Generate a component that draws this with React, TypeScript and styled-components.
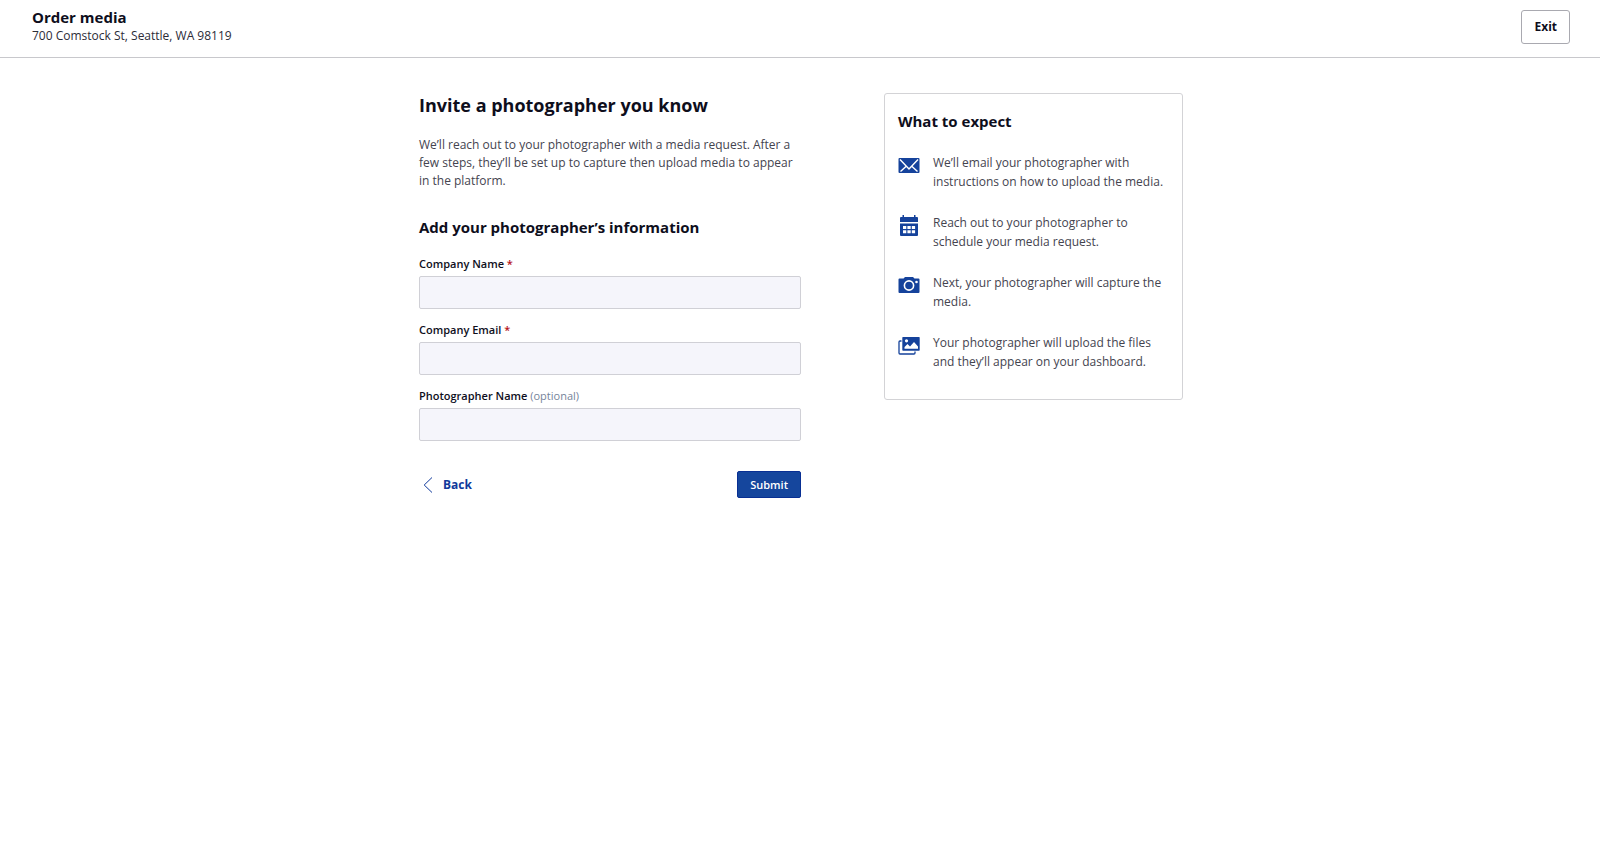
import React from 'react';
import styled, { createGlobalStyle } from 'styled-components';

const GlobalStyle = createGlobalStyle`
  * { box-sizing: border-box; }
  body {
    margin: 0;
    background: #fff;
    color: #0e0e1c;
    font-family: 'Open Sans', sans-serif;
    font-size: 12px;
    line-height: 18px;
  }
  h1, h2, p, ul { margin: 0; padding: 0; }
  button, input { font-family: inherit; }
`;

const TopBar = styled.header`
  display: flex;
  justify-content: space-between;
  align-items: center;
  padding: 8px 30px 11px 32px;
  border-bottom: 1px solid #c8c8cc;
`;

const PageTitle = styled.h1`
  font-size: 15px;
  line-height: 18px;
  font-weight: 700;
`;

const Address = styled.p`
  line-height: 20px;
  color: #2c2c38;
`;

const ExitButton = styled.button`
  height: 34px;
  padding: 0 12px;
  border: 1px solid #a9a9b0;
  border-radius: 3px;
  background: #fff;
  color: #0e0e1c;
  font-size: 12px;
  line-height: 16px;
  font-weight: 700;
`;

const Content = styled.main`
  display: grid;
  grid-template-columns: minmax(0, 382fr) minmax(0, 299fr);
  column-gap: 83px;
  align-items: start;
  max-width: 766px;
  margin: 35px auto;
  padding-left: 2px;
`;

const Heading = styled.h2<{ $large?: boolean }>`
  font-size: ${(p) => (p.$large ? 18 : 15)}px;
  line-height: 24px;
  font-weight: 700;
`;

const Intro = styled.p`
  margin: 19px 0 25px;
  color: #44444f;
`;

const Fields = styled.div`
  display: flex;
  flex-direction: column;
  gap: 13px;
  margin-top: 17px;
`;

const Field = styled.div`
  display: flex;
  flex-direction: column;
`;

const Label = styled.label`
  font-size: 11px;
  line-height: 16px;
  font-weight: 600;
  margin-bottom: 4px;
`;

const Required = styled.span`
  color: #b5121b;
`;

const Optional = styled.span`
  color: #76839a;
  font-weight: 400;
`;

const TextInput = styled.input`
  width: 100%;
  height: 33px;
  padding: 0 12px;
  border: 1px solid #d0d0d6;
  border-radius: 2px;
  background: #f5f5fb;
  font-size: 12px;
`;

const Actions = styled.div`
  display: flex;
  justify-content: space-between;
  align-items: center;
  margin-top: 30px;
`;

const BackButton = styled.button`
  display: flex;
  align-items: center;
  gap: 10px;
  padding: 0 4px;
  border: 0;
  background: none;
  color: #10399b;
  font-size: 12px;
  font-weight: 700;
`;

const SubmitButton = styled.button`
  height: 27px;
  padding: 0 12px;
  border: 1px solid #082f93;
  border-radius: 2px;
  background: #15469d;
  color: #fff;
  font-size: 11px;
  font-weight: 600;
`;

const Card = styled.aside`
  padding: 15px 13px 28px;
  border: 1px solid #d3d3d6;
  border-radius: 3px;
`;

const Steps = styled.ul`
  display: flex;
  flex-direction: column;
  gap: 22px;
  margin-top: 20px;
  list-style: none;
`;

const Step = styled.li`
  display: grid;
  grid-template-columns: 22px 1fr;
  column-gap: 13px;
  line-height: 19px;
  color: #44444f;
`;

const StepIcon = styled.svg`
  width: 22px;
  height: 22px;
  margin-top: 2px;
  fill: #15429b;
`;

const steps = [
  {
    text: 'We’ll email your photographer with instructions on how to upload the media.',
    icon: (
      <>
        <rect x="0.5" y="3" width="21" height="15" rx="1" />
        <path d="M2 4.5 11 14l9-9.5M2.5 16.5l6-5.5M19.5 16.5l-6-5.5" fill="none" stroke="#fff" strokeWidth="1.4" />
      </>
    ),
  },
  {
    text: 'Reach out to your photographer to schedule your media request.',
    icon: (
      <>
        <path d="M4.5 0H6v2h10V0h1.5v2H19a1 1 0 0 1 1 1v4H2V3a1 1 0 0 1 1-1h1.5z" />
        <path d="M2 8.5h18V20a1 1 0 0 1-1 1H3a1 1 0 0 1-1-1z" />
        <path d="M5 11h3.3v3H5zM9.4 11h3.3v3H9.4zM13.8 11h3.3v3h-3.3zM5 15.2h3.3v3H5zM9.4 15.2h3.3v3H9.4zM13.8 15.2h3.3v3h-3.3z" fill="#fff" />
      </>
    ),
  },
  {
    text: 'Next, your photographer will capture the media.',
    icon: (
      <>
        <path d="M1.5 3.5h4L7 2h8l1.5 1.5h4a1 1 0 0 1 1 1V17a1 1 0 0 1-1 1h-19a1 1 0 0 1-1-1V4.5a1 1 0 0 1 1-1z" />
        <circle cx="11" cy="10.5" r="4.6" fill="none" stroke="#fff" strokeWidth="1.6" />
        <circle cx="18.5" cy="7" r="1.3" fill="#fff" />
      </>
    ),
  },
  {
    text: 'Your photographer will upload the files and they’ll appear on your dashboard.',
    icon: (
      <>
        <path d="M3.5 6H2a1 1 0 0 0-1 1v11a1 1 0 0 0 1 1h14a1 1 0 0 0 1-1v-1.5" fill="none" stroke="#15429b" strokeWidth="1.3" />
        <path d="M5 2h16a.7.7 0 0 1 .7.7V15a.7.7 0 0 1-.7.7H5a.7.7 0 0 1-.7-.7V2.7A.7.7 0 0 1 5 2z" />
        <circle cx="8.5" cy="5.8" r="1.6" fill="#fff" />
        <path d="M6.5 13.7V12l3-3 2.500 2.500 4-4.500 4 4.500v2.200z" fill="#fff" />
      </>
    ),
  },
];

export default function App() {
  return (
    <>
      <GlobalStyle />
      <TopBar>
        <div>
          <PageTitle>Order media</PageTitle>
          <Address>700 Comstock St, Seattle, WA 98119</Address>
        </div>
        <ExitButton type="button">Exit</ExitButton>
      </TopBar>
      <Content>
        <form>
          <Heading $large>Invite a photographer you know</Heading>
          <Intro>
            We’ll reach out to your photographer with a media request. After a few steps, they’ll be set
            up to capture then upload media to appear in the platform.
          </Intro>
          <Heading>Add your photographer’s information</Heading>
          <Fields>
            <Field>
              <Label htmlFor="company-name">
                Company Name <Required>*</Required>
              </Label>
              <TextInput id="company-name" type="text" required />
            </Field>
            <Field>
              <Label htmlFor="company-email">
                Company Email <Required>*</Required>
              </Label>
              <TextInput id="company-email" type="email" required />
            </Field>
            <Field>
              <Label htmlFor="photographer-name">
                Photographer Name <Optional>(optional)</Optional>
              </Label>
              <TextInput id="photographer-name" type="text" />
            </Field>
          </Fields>
          <Actions>
            <BackButton type="button">
              <svg width="10" height="16" viewBox="0 0 10 16" fill="none" stroke="currentColor" aria-hidden="true">
                <path d="M9 0.5 1.2 8 9 15.5" />
              </svg>
              Back
            </BackButton>
            <SubmitButton type="submit">Submit</SubmitButton>
          </Actions>
        </form>
        <Card>
          <Heading>What to expect</Heading>
          <Steps>
            {steps.map((step) => (
              <Step key={step.text}>
                <StepIcon viewBox="0 0 22 22" aria-hidden="true">
                  {step.icon}
                </StepIcon>
                <span>{step.text}</span>
              </Step>
            ))}
          </Steps>
        </Card>
      </Content>
    </>
  );
}
